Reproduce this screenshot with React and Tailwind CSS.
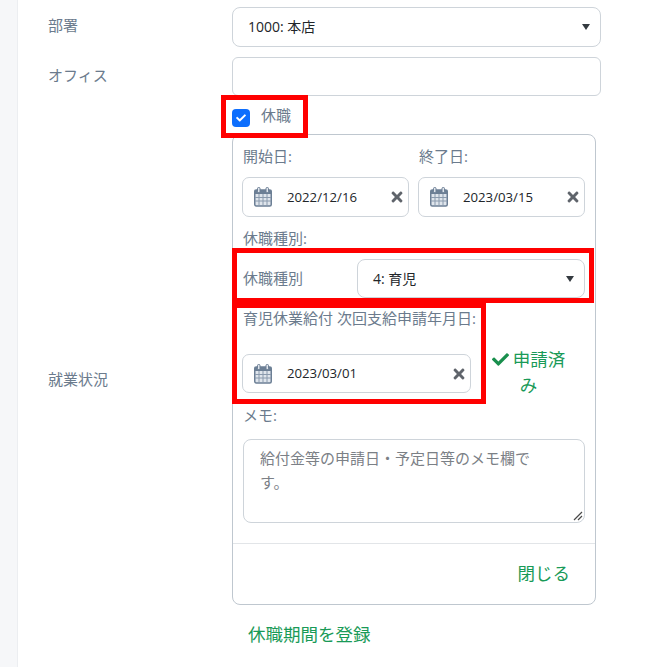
import React from 'react'
import { FaCheck, FaTimes } from 'react-icons/fa'

const font = { fontFamily: '"Open Sans", "Noto Sans CJK JP", sans-serif' }

const CalendarIcon = () => (
  <svg width="18" height="20" viewBox="0 0 18 20" className="shrink-0">
    <rect x="0.75" y="3" width="16.5" height="16" rx="1.5" fill="#dfe5ec" stroke="#6c7f95" strokeWidth="1.5" />
    <rect x="0.75" y="3" width="16.5" height="4" fill="#6c7f95" />
    <rect x="3.5" y="0.5" width="2.5" height="5" rx="1" fill="#dfe5ec" stroke="#6c7f95" />
    <rect x="12" y="0.5" width="2.5" height="5" rx="1" fill="#dfe5ec" stroke="#6c7f95" />
    <path d="M5 7v11M9 7v11M13 7v11M1 10.5h16M1 14h16" stroke="#8a9aad" strokeWidth="1" fill="none" />
  </svg>
)

const Caret = () => (
  <svg width="8" height="6" viewBox="0 0 8 6" className="shrink-0">
    <path d="M0 0h8L4 6z" fill="#343a40" />
  </svg>
)

const DateBox = ({ value, className = 'h-[40px]' }) => (
  <div className={`flex items-center border border-[#ced4da] rounded-[7px] bg-white pl-[11px] pr-[3px] ${className}`}>
    <CalendarIcon />
    <span className="ml-[15px] mt-[1px] flex-1 text-[13.2px] text-[#212529]">{value}</span>
    <FaTimes className="text-[#5f646b] text-[16px]" />
  </div>
)

const RedBox = ({ className }) => (
  <div className={`absolute border-[5px] border-[#ff0000] pointer-events-none ${className}`} />
)

export default function App() {
  return (
    <div style={font} className="flex w-[656px] h-[667px] overflow-hidden bg-white text-[15px] text-[#6b7b8d]">
      <div className="w-[18px] shrink-0 bg-[#f6f7f9] border-r border-[#eceef1]" />

      <div className="pl-[30px] pt-[7px] w-[583px]">
        <div className="grid grid-cols-[184px_369px] items-center">
          <label className="-mt-[4px]">部署</label>
          <div className="flex items-center justify-between h-[40px] border border-[#ced4da] rounded-[8px] pl-[15px] pr-[10px]">
            <span className="text-[14px] text-[#212529] -mt-[1px]">1000: 本店</span>
            <Caret />
          </div>
        </div>

        <div className="grid grid-cols-[184px_369px] items-center mt-[10px]">
          <label className="-mt-[2px]">オフィス</label>
          <div className="h-[39px] border border-[#ced4da] rounded-[6px]" />
        </div>

        <div className="grid grid-cols-[184px_369px]">
          <label className="self-center mt-[15px]">就業状況</label>

          <div>
            <div className="relative flex items-center h-[38px]">
              <span className="flex items-center justify-center w-[18px] h-[18px] mt-[6px] rounded-[4px] bg-[#0d6efd]">
                <FaCheck className="text-white text-[10px]" />
              </span>
              <span className="ml-[11px]">休職</span>
              <RedBox className="left-[-11px] top-[-1px] w-[87px] h-[43px]" />
            </div>

            <div className="w-[364px] border border-[#bfc7cf] rounded-[8px] h-[471px]">
              <div className="px-[9px]">
                <div className="grid grid-cols-[167px_167px] gap-x-[9px] pt-[10px]">
                  <div>
                    <div className="h-[32px] pl-[1px]">開始日:</div>
                    <DateBox value="2022/12/16" />
                  </div>
                  <div>
                    <div className="h-[32px] pl-[1px]">終了日:</div>
                    <DateBox value="2023/03/15" />
                  </div>
                </div>

                <div className="pl-[1px] mt-[10px] h-[22px]">休職種別:</div>

                <div className="relative flex items-center h-[39px] mt-[10px]">
                  <span className="w-[115px] pl-[1px] shrink-0">休職種別</span>
                  <div className="flex items-center justify-between w-[228px] h-[39px] border border-[#ced4da] rounded-[8px] pl-[15px] pr-[10px]">
                    <span className="text-[14px] text-[#212529]">4: 育児</span>
                    <Caret />
                  </div>
                  <RedBox className="left-[-10px] top-[-11px] w-[362px] h-[55px]" />
                </div>

                <div className="relative flex mt-[8px]">
                  <div className="w-[229px] shrink-0">
                    <div className="h-[48px] pl-[1px] pt-[1px] whitespace-nowrap">育児休業給付 次回支給申請年月日:</div>
                    <DateBox value="2023/03/01" className="h-[39px]" />
                  </div>
                  <div className="flex-1 pt-[40px] pl-[17px] pr-[17px] text-center text-[17.5px] leading-[26px] text-[#199a57]">
                    <FaCheck className="inline text-[#198f4d] text-[17px] mr-[4px] align-[-2px]" />
                    申請済み
                  </div>
                  <RedBox className="left-[-10px] top-[-3px] w-[254px] h-[101px]" />
                </div>

                <div className="pl-[1px] mt-[6px] h-[22px]">メモ:</div>
                <div className="relative mt-[13px] ml-[1px] h-[84px] w-[342px] border border-[#ced4da] rounded-[8px] pl-[16px] pr-[40px] pt-[6px] leading-[24px] text-[#7b8086]">
                  給付金等の申請日・予定日等のメモ欄です。
                  <svg width="10" height="10" viewBox="0 0 10 10" className="absolute right-[1px] bottom-[1px]">
                    <path d="M1 9L9 1M5 9L9 5" stroke="#4a4a4a" strokeWidth="1.2" fill="none" />
                  </svg>
                </div>
              </div>

              <div className="mt-[20px] border-t border-[#e2e5e8] h-[60px] flex items-center justify-end pr-[25px] text-[17.5px] text-[#199a57]">
                閉じる
              </div>
            </div>

            <div className="pl-[16px] mt-[16px] text-[17.5px] text-[#199a57]">休職期間を登録</div>
          </div>
        </div>
      </div>
    </div>
  )
}
